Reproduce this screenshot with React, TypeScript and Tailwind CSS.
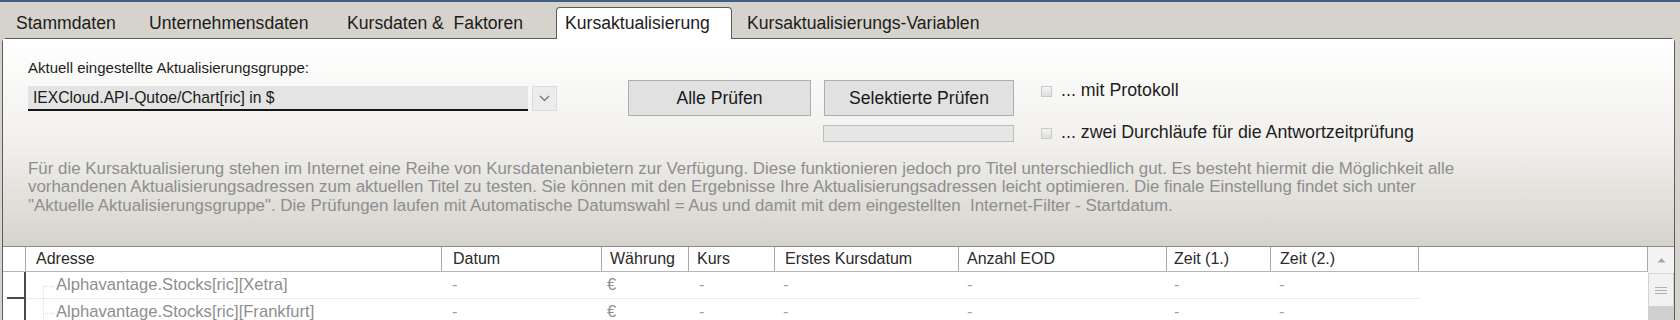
import React from "react";

const cols = [
  { label: "Adresse", w: "w-[416px]", pl: "pl-[10px]" },
  { label: "Datum", w: "w-[160px]", pl: "pl-[11px]" },
  { label: "Währung", w: "w-[87px]", pl: "pl-[8px]" },
  { label: "Kurs", w: "w-[86px]", pl: "pl-[8px]" },
  { label: "Erstes Kursdatum", w: "w-[184px]", pl: "pl-[10px]" },
  { label: "Anzahl EOD", w: "w-[208px]", pl: "pl-[8px]" },
  { label: "Zeit (1.)", w: "w-[104px]", pl: "pl-[7px]" },
  { label: "Zeit (2.)", w: "w-[148px]", pl: "pl-[9px]" },
];

const rows = ["Alphavantage.Stocks[ric][Xetra]", "Alphavantage.Stocks[ric][Frankfurt]"];

function Tab({ w, pl, children }: { w: string; pl: string; children: React.ReactNode }) {
  return (
    <div className={`${w} ${pl} h-[31px] pt-[2px] flex items-center whitespace-pre text-[17.6px] leading-none text-[#1c1c1c]`}>
      {children}
    </div>
  );
}

function Check({ label }: { label: string }) {
  return (
    <div className="flex h-[20px] items-center gap-[9px] whitespace-nowrap">
      <div className="h-[11px] w-[11px] border border-[#c9c9c9] bg-linear-to-b from-[#f4f4f4] to-[#dedede]" />
      <span className="text-[17.8px] leading-none text-[#1e1e1e]">{label}</span>
    </div>
  );
}

export default function App() {
  return (
    <div className="h-[320px] w-[1680px] overflow-hidden bg-[#d6d3cc] font-[Liberation_Sans,Arial,sans-serif]">
      <div className="h-[2px] bg-[#3f5f80]" />
      {/* tabs */}
      <div className="flex h-[36px] items-end pl-[3px]">
        <Tab w="w-[132px]" pl="pl-[13px]">Stammdaten</Tab>
        <Tab w="w-[199px]" pl="pl-[14px]">Unternehmensdaten</Tab>
        <Tab w="w-[222px]" pl="pl-[13px]">{"Kursdaten &  Faktoren"}</Tab>
        <div className="relative z-10 -mb-px flex h-[32px] w-[176px] items-center rounded-t-[4px] border border-b-0 border-[#5c5c5c] bg-white pl-[8px] text-[17.6px] leading-none text-[#1c1c1c]">
          Kursaktualisierung
        </div>
        <Tab w="w-[300px]" pl="pl-[15px]">Kursaktualisierungs-Variablen</Tab>
      </div>

      {/* panel */}
      <div className="ml-[2px] mr-[5px] rounded-t-[4px] border border-[#5c5c5c] bg-[#d6d3cc]">
        <div className="h-[207px] bg-linear-to-b from-white via-[#f1f0ed] to-[#d6d3cc] pl-[25px]">
          <div className="flex items-start">
            {/* col 1 */}
            <div className="pt-[20px]">
              <div className="h-[18px] text-[15px] leading-[18px] text-[#1e1e1e]">
                Aktuell eingestellte Aktualisierungsgruppe:
              </div>
              <div className="mt-[9px] flex h-[25px]">
                <div className="flex h-[25px] w-[500px] items-center border-b-2 border-[#151515] bg-[#e4e4e4] pl-[5px] text-[15.7px] text-[#1a1a1a]">
                  IEXCloud.API-Qutoe/Chart[ric] in $
                </div>
                <div className="ml-[4px] flex h-[25px] w-[25px] items-center justify-center border border-[#dcdcdc] bg-[#ececec]">
                  <svg width="11" height="7" viewBox="0 0 11 7">
                    <path d="M1 1 L5.5 5.5 L10 1" fill="none" stroke="#707070" strokeWidth="1.2" />
                  </svg>
                </div>
              </div>
            </div>
            {/* col 2 */}
            <div className="ml-[71px] pt-[41px]">
              <div className="flex gap-[13px]">
                <div className="flex h-[36px] w-[183px] items-center justify-center border border-[#adadad] bg-[#e1e1e1] text-[17.6px] text-[#1a1a1a]">
                  Alle Prüfen
                </div>
                <div className="flex h-[36px] w-[190px] items-center justify-center border border-[#adadad] bg-[#e1e1e1] text-[17.6px] text-[#1a1a1a]">
                  Selektierte Prüfen
                </div>
              </div>
              <div className="ml-[195px] mt-[9px] h-[17px] w-[191px] border border-[#bdbdbd] bg-[#e6e6e6]" />
            </div>
            {/* col 3 */}
            <div className="ml-[27px] pt-[42px]">
              <Check label="... mit Protokoll" />
              <div className="mt-[22px]">
                <Check label="... zwei Durchläufe für die Antwortzeitprüfung" />
              </div>
            </div>
          </div>
          <div className="mt-[17px] whitespace-pre text-[16.9px] leading-[18.3px] text-[#8e8e8e]">
            Für die Kursaktualisierung stehen im Internet eine Reihe von Kursdatenanbietern zur Verfügung. Diese funktionieren jedoch pro Titel unterschiedlich gut. Es besteht hiermit die Möglichkeit alle
            <br />
            vorhandenen Aktualisierungsadressen zum aktuellen Titel zu testen. Sie können mit den Ergebnisse Ihre Aktualisierungsadressen leicht optimieren. Die finale Einstellung findet sich unter
            <br />
            {"\"Aktuelle Aktualisierungsgruppe\". Die Prüfungen laufen mit Automatische Datumswahl = Aus und damit mit dem eingestellten  Internet-Filter - Startdatum."}
          </div>
        </div>

        {/* table */}
        <div className="flex h-[80px] border-t border-[#8a8a8a] bg-white">
          <div className="flex flex-1 flex-col">
            {/* header */}
            <div className="flex h-[26px] border-b border-[#b4b4b4]">
              <div className="h-full w-[23px] border-r border-[#a8a8a8]" />
              {cols.map((c) => (
                <div
                  key={c.label}
                  className={`${c.w} ${c.pl} flex h-full items-center border-r border-[#a8a8a8] text-[16px] text-[#2a2a2a] whitespace-nowrap`}
                >
                  {c.label}
                </div>
              ))}
              <div className="h-full flex-1 border-r border-[#a8a8a8]" />
            </div>
            {rows.map((r, i) => (
              <div key={r} className="relative flex h-[28px]">
                <div className="h-full w-[23px] pl-[4px]">
                  <div
                    className={
                      i === 0
                        ? "h-full border-b-2 border-r-2 border-[#4a4a4a]"
                        : "h-full border-r-2 border-[#4a4a4a]"
                    }
                  />
                </div>
                <div className="flex h-full border-b border-[#ebebeb] text-[16.6px] text-[#8e8e8e]">
                  <div className="relative flex w-[416px] items-center pl-[30px] whitespace-nowrap">
                    <div className="absolute left-[17px] top-[14px] w-[11px] border-t border-dotted border-[#dcdcdc]" />
                    <div className="absolute left-[17px] top-[14px] h-[28px] border-l border-dotted border-[#e0e0e0]" />
                    {r}
                  </div>
                  <div className="flex w-[160px] items-center pl-[10px] text-[#a2a2a2]">-</div>
                  <div className="flex w-[87px] items-center pl-[5px] text-[#8e8e8e]">€</div>
                  <div className="flex w-[86px] items-center pl-[10px] text-[#a2a2a2]">-</div>
                  <div className="flex w-[184px] items-center pl-[8px] text-[#a2a2a2]">-</div>
                  <div className="flex w-[208px] items-center pl-[8px] text-[#a2a2a2]">-</div>
                  <div className="flex w-[104px] items-center pl-[7px] text-[#a2a2a2]">-</div>
                  <div className="flex w-[148px] items-center pl-[8px] text-[#a2a2a2]">-</div>
                </div>
              </div>
            ))}
          </div>
          {/* scrollbar */}
          <div className="flex w-[26px] flex-col">
            <div className="flex h-[26px] items-center justify-center bg-[#f4f4f4]">
              <svg width="9" height="6" viewBox="0 0 9 6">
                <path d="M0.5 5.5 L4.5 1 L8.5 5.5 Z" fill="#a8a8a8" />
              </svg>
            </div>
            <div className="flex h-[34px] flex-col items-center justify-center gap-[2px] border border-[#d2d2d2] bg-[#f2f2f2]">
              <div className="h-px w-[12px] bg-[#b0b0b0]" />
              <div className="h-px w-[12px] bg-[#b0b0b0]" />
              <div className="h-px w-[12px] bg-[#b0b0b0]" />
            </div>
            <div className="flex-1 bg-[#cfcfcf]" />
          </div>
        </div>
      </div>
    </div>
  );
}
